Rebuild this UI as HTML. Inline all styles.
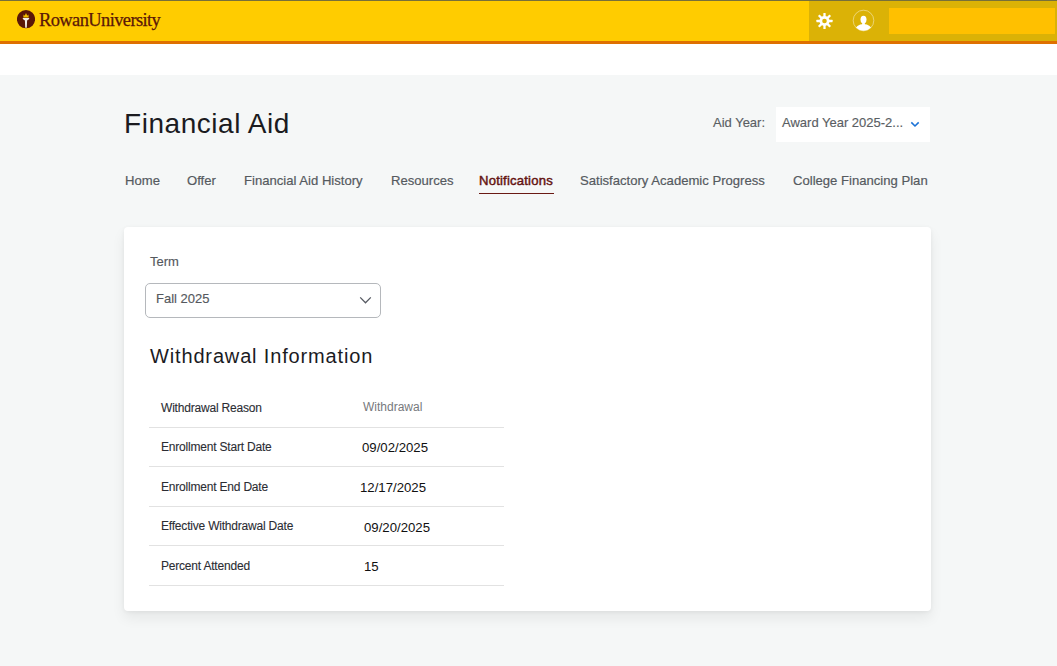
<!DOCTYPE html>
<html>
<head>
<meta charset="utf-8">
<style>
*{box-sizing:border-box;margin:0;padding:0}
html,body{width:1057px;height:666px;overflow:hidden}
body{background:#f5f7f7;font-family:"Liberation Sans",sans-serif;position:relative}
.hdr{position:absolute;left:0;top:0;width:1057px;height:44px;background:#ffcc00;border-top:1px solid #77703a;border-bottom:3px solid #de7000}
.hdr-dark{position:absolute;left:809px;top:1px;width:248px;height:40px;background:#dbb206}
.hdr-box{position:absolute;left:889px;top:8px;width:166px;height:25.5px;background:#ffc000}
.logo-circle{position:absolute;left:17px;top:9px;width:18px;height:18px;border-radius:50%;background:#5a1708}
.logo-text{position:absolute;left:39px;top:9.5px;font-family:"Liberation Serif",serif;font-size:18.5px;color:#5a1708;letter-spacing:-0.62px;white-space:nowrap;-webkit-text-stroke:0.25px #5a1708}
.white{position:absolute;left:0;top:44px;width:1057px;height:31px;background:#fff}
.abs{position:absolute;white-space:nowrap}
.title{left:124px;top:108px;font-size:28px;letter-spacing:0.55px;color:#1b1b1f}
.nav{top:173px;font-size:13.1px;color:#555a5f;-webkit-text-stroke:0.2px #555a5f}
.nav.active{color:#6b1210}
.uline{position:absolute;left:479px;top:193px;width:75px;height:1.2px;background:#6a1a14}
.aidlbl{left:713px;top:115px;font-size:13px;color:#5a5e63;-webkit-text-stroke:0.15px #5a5e63}
.aidbox{position:absolute;left:776px;top:107px;width:154px;height:35px;background:#fff}
.aidtxt{left:782px;top:115px;font-size:13px;color:#5a5e63;-webkit-text-stroke:0.15px #5a5e63}
.card{position:absolute;left:124px;top:227px;width:807px;height:384px;background:#fff;border-radius:4px;box-shadow:0 1px 4px rgba(0,0,0,0.05),0 7px 14px rgba(0,0,0,0.065)}
.term{left:150px;top:254px;font-size:13px;color:#55595e;-webkit-text-stroke:0.15px #55595e}
.sel{position:absolute;left:145px;top:283px;width:236px;height:35px;border:1px solid #b5b8bc;border-radius:5px;background:#fff}
.seltxt{left:156px;top:291px;font-size:13px;color:#55595e;-webkit-text-stroke:0.15px #55595e}
.h2{left:150px;top:345px;font-size:20px;letter-spacing:0.85px;color:#1b1b1f}
.row{position:absolute;left:149px;width:355px;height:1px;background:#e2e2e2}
.lbl{left:161px;font-size:12px;letter-spacing:-0.2px;color:#2b2d33;margin-top:1.5px;-webkit-text-stroke:0.1px #2b2d33}
.val{font-size:13.2px;color:#111}
</style>
</head>
<body>
<div class="hdr"></div>
<div class="hdr-dark"></div>
<div class="hdr-box"></div>
<svg class="abs" style="left:815px;top:12px" width="19" height="18" viewBox="-9.5 -9 19 18">
<g fill="#fff">
<circle r="5.0"/>
<g id="t"><rect x="-1.15" y="-8.1" width="2.3" height="4" rx="0.3"/></g>
<use href="#t" transform="rotate(45)"/><use href="#t" transform="rotate(90)"/><use href="#t" transform="rotate(135)"/>
<use href="#t" transform="rotate(180)"/><use href="#t" transform="rotate(225)"/><use href="#t" transform="rotate(270)"/><use href="#t" transform="rotate(315)"/>
</g>
<circle r="2.3" fill="#dbb206"/>
</svg>
<svg class="abs" style="left:852px;top:9px" width="23" height="23" viewBox="0 0 23 23">
<defs><clipPath id="cp"><circle cx="11.5" cy="11.5" r="10.3"/></clipPath></defs>
<circle cx="11.5" cy="11.5" r="10.3" fill="none" stroke="rgba(255,255,255,0.55)" stroke-width="0.8"/>
<g clip-path="url(#cp)" fill="#fff">
<ellipse cx="11.5" cy="10.6" rx="3.0" ry="3.9"/><rect x="10.2" y="12" width="2.6" height="4"/>
<ellipse cx="11.5" cy="21.8" rx="8.6" ry="6.9"/>
</g>
</svg>
<svg class="abs" style="left:17px;top:9.5px" width="18" height="19" viewBox="0 0 18 19">
<circle cx="9" cy="9.2" r="9.1" fill="#5a1708"/>
<path d="M6.3 7.4 L6.6 4.6 L7.7 5.8 L9 3.0 L10.3 5.8 L11.4 4.6 L11.7 7.4 Z" fill="#f0c000"/>
<path d="M5.6 7.9 L12.4 7.9 L11.9 9.2 L10.1 10.6 L9.8 17.8 L8.2 17.8 L7.9 10.6 L6.1 9.2 Z" fill="#f1ece8"/>
</svg>
<div class="logo-text">RowanUniversity</div>
<div class="white"></div>

<div class="abs title">Financial Aid</div>
<div class="abs aidlbl">Aid Year:</div>
<div class="aidbox"></div>
<div class="abs aidtxt">Award Year 2025-2...</div>
<svg class="abs" style="left:909.6px;top:120.6px" width="10" height="7" viewBox="0 0 10 7"><path d="M1.3 1.4 L5 5 L8.7 1.4" fill="none" stroke="#1b72d6" stroke-width="1.6"/></svg>

<div class="abs nav" style="left:125px">Home</div>
<div class="abs nav" style="left:187px">Offer</div>
<div class="abs nav" style="left:244px">Financial Aid History</div>
<div class="abs nav" style="left:391px">Resources</div>
<div class="abs nav active" style="left:479px;letter-spacing:0.2px;-webkit-text-stroke:0.45px #5e1210">Notifications</div>
<div class="uline"></div>
<div class="abs nav" style="left:580px">Satisfactory Academic Progress</div>
<div class="abs nav" style="left:793px">College Financing Plan</div>

<div class="card"></div>
<div class="abs term">Term</div>
<div class="sel"></div>
<div class="abs seltxt">Fall 2025</div>
<svg class="abs" style="left:359px;top:296px" width="13" height="9" viewBox="0 0 13 9"><path d="M1.2 1.4 L6.5 6.8 L11.8 1.4" fill="none" stroke="#565a62" stroke-width="1.25"/></svg>
<div class="abs h2">Withdrawal Information</div>

<div class="abs lbl" style="top:399px">Withdrawal Reason</div>
<div class="abs val" style="left:363px;top:400px;font-size:12px;color:#77797d">Withdrawal</div>
<div class="row" style="top:427px"></div>
<div class="abs lbl" style="top:438px">Enrollment Start Date</div>
<div class="abs val" style="left:362px;top:440px">09/02/2025</div>
<div class="row" style="top:466px"></div>
<div class="abs lbl" style="top:478px">Enrollment End Date</div>
<div class="abs val" style="left:360px;top:480px">12/17/2025</div>
<div class="row" style="top:506px"></div>
<div class="abs lbl" style="top:517px">Effective Withdrawal Date</div>
<div class="abs val" style="left:364px;top:520px">09/20/2025</div>
<div class="row" style="top:545px"></div>
<div class="abs lbl" style="top:557px">Percent Attended</div>
<div class="abs val" style="left:364px;top:559px">15</div>
<div class="row" style="top:585px"></div>
</body>
</html>
